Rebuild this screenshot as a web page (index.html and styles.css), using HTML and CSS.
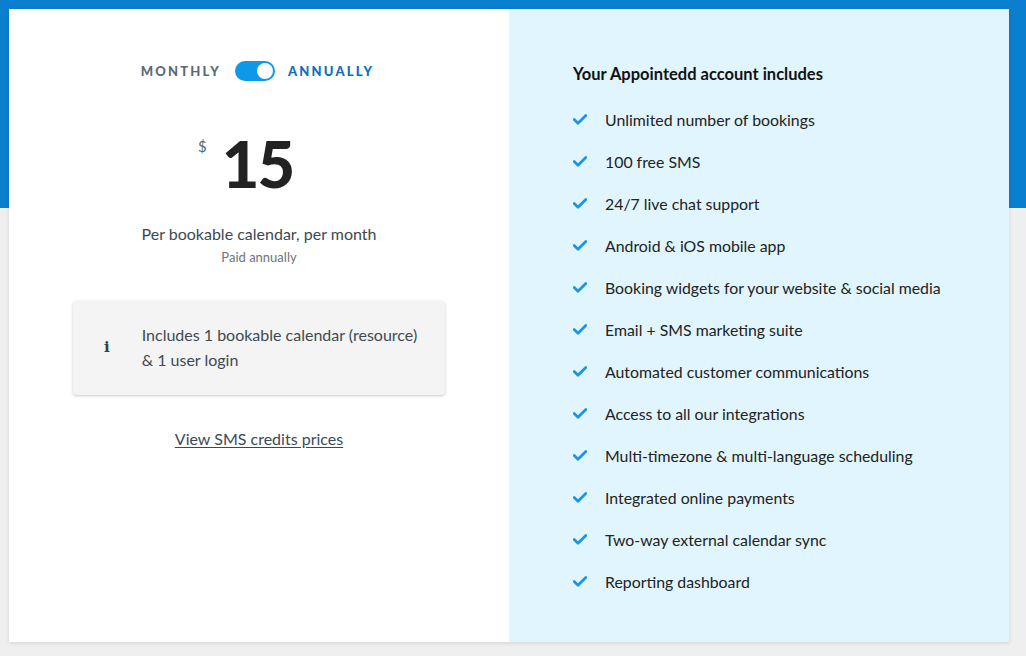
FILE: index.html
```html
<!DOCTYPE html>
<html lang="en">
<head>
<meta charset="utf-8">
<title>Pricing</title>
<link rel="stylesheet" href="styles.css">
</head>
<body>
<div class="card">
  <section class="plan">
    <div class="toggle-row">
      <span class="label label-off">MONTHLY</span>
      <span class="switch"><span class="knob"></span></span>
      <span class="label label-on">ANNUALLY</span>
    </div>
    <div class="price">
      <span class="amount"><span class="currency">$</span>15</span>
    </div>
    <p class="per">Per bookable calendar, per month</p>
    <p class="paid">Paid annually</p>
    <div class="info">
      <span class="info-icon">i</span>
      <p class="info-text">Includes 1 bookable calendar (resource) &amp; 1 user login</p>
    </div>
    <a class="sms-link" href="#">View SMS credits prices</a>
  </section>
  <section class="features">
    <h2 class="features-title">Your Appointedd account includes</h2>
    <ul class="feature-list">
      <li><svg class="check" viewBox="0 0 14 11"><path d="M1.2 5.6 L5 9.2 L12.8 1.6" fill="none" stroke="#1a97de" stroke-width="2.8" stroke-linecap="round" stroke-linejoin="round"/></svg><span>Unlimited number of bookings</span></li>
      <li><svg class="check" viewBox="0 0 14 11"><path d="M1.2 5.6 L5 9.2 L12.8 1.6" fill="none" stroke="#1a97de" stroke-width="2.8" stroke-linecap="round" stroke-linejoin="round"/></svg><span>100 free SMS</span></li>
      <li><svg class="check" viewBox="0 0 14 11"><path d="M1.2 5.6 L5 9.2 L12.8 1.6" fill="none" stroke="#1a97de" stroke-width="2.8" stroke-linecap="round" stroke-linejoin="round"/></svg><span>24/7 live chat support</span></li>
      <li><svg class="check" viewBox="0 0 14 11"><path d="M1.2 5.6 L5 9.2 L12.8 1.6" fill="none" stroke="#1a97de" stroke-width="2.8" stroke-linecap="round" stroke-linejoin="round"/></svg><span>Android &amp; iOS mobile app</span></li>
      <li><svg class="check" viewBox="0 0 14 11"><path d="M1.2 5.6 L5 9.2 L12.8 1.6" fill="none" stroke="#1a97de" stroke-width="2.8" stroke-linecap="round" stroke-linejoin="round"/></svg><span>Booking widgets for your website &amp; social media</span></li>
      <li><svg class="check" viewBox="0 0 14 11"><path d="M1.2 5.6 L5 9.2 L12.8 1.6" fill="none" stroke="#1a97de" stroke-width="2.8" stroke-linecap="round" stroke-linejoin="round"/></svg><span>Email + SMS marketing suite</span></li>
      <li><svg class="check" viewBox="0 0 14 11"><path d="M1.2 5.6 L5 9.2 L12.8 1.6" fill="none" stroke="#1a97de" stroke-width="2.8" stroke-linecap="round" stroke-linejoin="round"/></svg><span>Automated customer communications</span></li>
      <li><svg class="check" viewBox="0 0 14 11"><path d="M1.2 5.6 L5 9.2 L12.8 1.6" fill="none" stroke="#1a97de" stroke-width="2.8" stroke-linecap="round" stroke-linejoin="round"/></svg><span>Access to all our integrations</span></li>
      <li><svg class="check" viewBox="0 0 14 11"><path d="M1.2 5.6 L5 9.2 L12.8 1.6" fill="none" stroke="#1a97de" stroke-width="2.8" stroke-linecap="round" stroke-linejoin="round"/></svg><span>Multi-timezone &amp; multi-language scheduling</span></li>
      <li><svg class="check" viewBox="0 0 14 11"><path d="M1.2 5.6 L5 9.2 L12.8 1.6" fill="none" stroke="#1a97de" stroke-width="2.8" stroke-linecap="round" stroke-linejoin="round"/></svg><span>Integrated online payments</span></li>
      <li><svg class="check" viewBox="0 0 14 11"><path d="M1.2 5.6 L5 9.2 L12.8 1.6" fill="none" stroke="#1a97de" stroke-width="2.8" stroke-linecap="round" stroke-linejoin="round"/></svg><span>Two-way external calendar sync</span></li>
      <li><svg class="check" viewBox="0 0 14 11"><path d="M1.2 5.6 L5 9.2 L12.8 1.6" fill="none" stroke="#1a97de" stroke-width="2.8" stroke-linecap="round" stroke-linejoin="round"/></svg><span>Reporting dashboard</span></li>
    </ul>
  </section>
</div>
</body>
</html>
```

FILE: styles.css
```css
* { box-sizing: border-box; }
html, body { margin: 0; padding: 0; }
body {
  width: 1026px;
  height: 656px;
  overflow: hidden;
  font-family: Lato, "Open Sans", Arial, sans-serif;
  background: linear-gradient(to bottom, #0a7fcf 0, #0a7fcf 208px, #efefef 208px, #efefef 100%);
  padding: 9px 0 0 9px;
}
.card {
  width: 1000px;
  height: 633px;
  display: grid;
  grid-template-columns: 500px 500px;
  background: #fff;
  box-shadow: 0 1px 4px rgba(0,0,0,0.12);
}
.plan {
  display: flex;
  flex-direction: column;
  align-items: center;
  padding-top: 52px;
  background: #fff;
}
.toggle-row {
  display: flex;
  align-items: center;
  height: 20px;
  gap: 14px;
  margin-left: -3px;
}
.label {
  font-size: 13px;
  font-weight: 900;
  letter-spacing: 2.2px;
}
.label-off { color: #5b6a76; }
.label-on { color: #0a6ec0; margin-left: -1px; }
.switch {
  width: 40px;
  height: 20px;
  border-radius: 10px;
  background: #0d98e8;
  display: flex;
  align-items: center;
  justify-content: flex-end;
  padding-right: 2px;
}
.knob {
  width: 16px;
  height: 16px;
  border-radius: 50%;
  background: #fff;
}
.price {
  margin-top: 47px;
  display: flex;
  justify-content: center;
}
.amount {
  position: relative;
  font-size: 65px;
  line-height: 70px;
  font-weight: 900;
  color: #222;
  letter-spacing: -2px;
  margin-right: 3px;
}
.currency {
  position: absolute;
  right: 100%;
  top: 8px;
  margin-right: 15px;
  font-size: 15px;
  line-height: 20px;
  font-weight: 400;
  color: #4d6b78;
  letter-spacing: 0;
}
.per {
  margin: 26px 0 0;
  font-size: 16px;
  line-height: 20px;
  color: #3d4852;
}
.paid {
  margin: 6px 0 0;
  font-size: 13px;
  line-height: 14px;
  color: #6b747c;
}
.info {
  margin-top: 37px;
  width: 372px;
  height: 94px;
  background: #f4f4f4;
  border-radius: 4px;
  box-shadow: 0 1px 3px rgba(0,0,0,0.22);
  display: flex;
  align-items: center;
  padding: 0 16px 2px 31px;
}
.info-icon {
  width: 7px;
  font-family: "DejaVu Serif", "Liberation Serif", serif;
  font-weight: 700;
  font-size: 15px;
  color: #35404a;
  margin-right: 32px;
}
.info-text {
  margin: 0;
  font-size: 16px;
  line-height: 25px;
  color: #3e4a55;
}
.sms-link {
  margin-top: 34px;
  font-size: 16px;
  line-height: 20px;
  color: #3b4a58;
  text-decoration: underline;
  text-underline-offset: 2px;
}
.features {
  background: #e1f5fe;
  padding: 55px 0 0 64px;
}
.features-title {
  margin: 0;
  font-size: 16.5px;
  line-height: 20px;
  font-weight: 700;
  color: #111;
}
.feature-list {
  list-style: none;
  margin: 14px 0 0;
  padding: 0;
}
.feature-list li {
  display: flex;
  align-items: center;
  height: 42px;
  font-size: 15.85px;
  color: #222;
}
.check {
  width: 14px;
  height: 11px;
  margin-right: 18px;
  flex: none;
}
```
